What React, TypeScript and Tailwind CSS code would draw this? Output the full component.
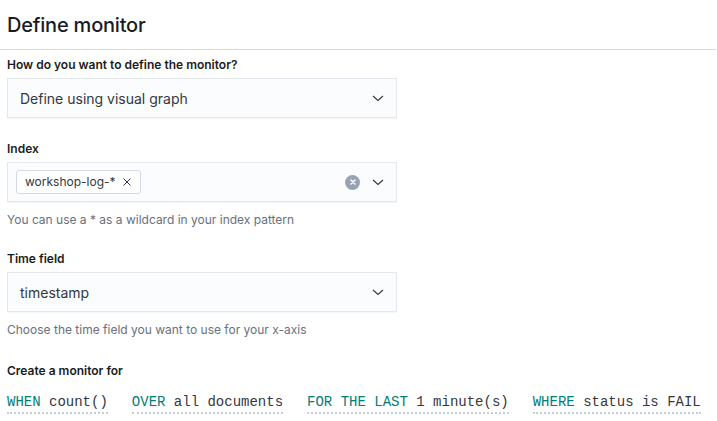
import React from 'react';

const Chevron = () => (
  <svg width="16" height="16" viewBox="0 0 16 16" className="text-[#343741]">
    <path d="M3 6l5 4.5L13 6" fill="none" stroke="currentColor" strokeWidth="1.1" />
  </svg>
);

const SelectBox = ({ children, extra }: { children: React.ReactNode; extra?: React.ReactNode }) => (
  <div className="w-[390px] h-[40px] flex items-center justify-between bg-[#fbfcfd] border border-[#e4e7ec] shadow-[0_1px_1px_rgba(0,0,0,0.03)] pl-[12px] pr-[10px]">
    <div className="flex items-center">{children}</div>
    <div className="flex items-center gap-[10px]">
      {extra}
      <Chevron />
    </div>
  </div>
);

const Label = ({ children }: { children: React.ReactNode }) => (
  <div className="text-[12px] font-semibold text-[#1a1c21] leading-[16px] mb-[5px]">{children}</div>
);

const Help = ({ children }: { children: React.ReactNode }) => (
  <div className="text-[12px] text-[#69707d] leading-[16px] mt-[10px]">{children}</div>
);

const Expr = ({ kw, value }: { kw: string; value: string }) => (
  <div className="border-b-2 border-dotted border-[#c5cdd9] pb-[1px] whitespace-pre">
    <span className="text-[#017d73]">{kw}</span>
    <span className="text-[#343741]"> {value}</span>
  </div>
);

export default function App() {
  return (
    <div className="w-[717px] h-[421px] bg-white font-['Inter',sans-serif] overflow-hidden">
      <div className="px-[7px] pt-[12px] pb-[11px] border-b border-[#d3dae6] w-[716px]">
        <h2 className="text-[20px] leading-[26px] font-medium text-[#1a1c21] tracking-[-0.2px]">Define monitor</h2>
      </div>
      <div className="px-[7px] pt-[7px]">
        <Label>How do you want to define the monitor?</Label>
        <SelectBox>
          <span className="text-[14px] text-[#343741]">Define using visual graph</span>
        </SelectBox>

        <div className="mt-[23px]">
          <Label>Index</Label>
          <SelectBox
            extra={
              <span className="w-[15px] h-[15px] rounded-full bg-[#98a2b3] flex items-center justify-center">
                <svg width="8" height="8" viewBox="0 0 8 8">
                  <path d="M2 2l4 4M6 2l-4 4" stroke="white" strokeWidth="1.6" strokeLinecap="round" />
                </svg>
              </span>
            }
          >
            <span className="-ml-[4px] h-[24px] flex items-center gap-[6px] border border-[#d3dae6] rounded-[3px] bg-white px-[8px] text-[12px] text-[#343741]">
              workshop-log-*
              <svg width="10" height="10" viewBox="0 0 10 10">
                <path d="M1.5 1.5l7 7M8.5 1.5l-7 7" stroke="#343741" strokeWidth="1" />
              </svg>
            </span>
          </SelectBox>
          <Help>You can use a * as a wildcard in your index pattern</Help>
        </div>

        <div className="mt-[23px]">
          <Label>Time field</Label>
          <SelectBox>
            <span className="text-[14px] text-[#343741]">timestamp</span>
          </SelectBox>
          <Help>Choose the time field you want to use for your x-axis</Help>
        </div>

        <div className="mt-[25px]">
          <Label>Create a monitor for</Label>
          <div className="flex gap-[24px] mt-[14px] font-['Liberation_Mono',monospace] text-[14px] leading-[18px]">
            <Expr kw="WHEN" value="count()" />
            <Expr kw="OVER" value="all documents" />
            <Expr kw="FOR THE LAST" value="1 minute(s)" />
            <Expr kw="WHERE" value="status is FAIL" />
          </div>
        </div>
      </div>
    </div>
  );
}
